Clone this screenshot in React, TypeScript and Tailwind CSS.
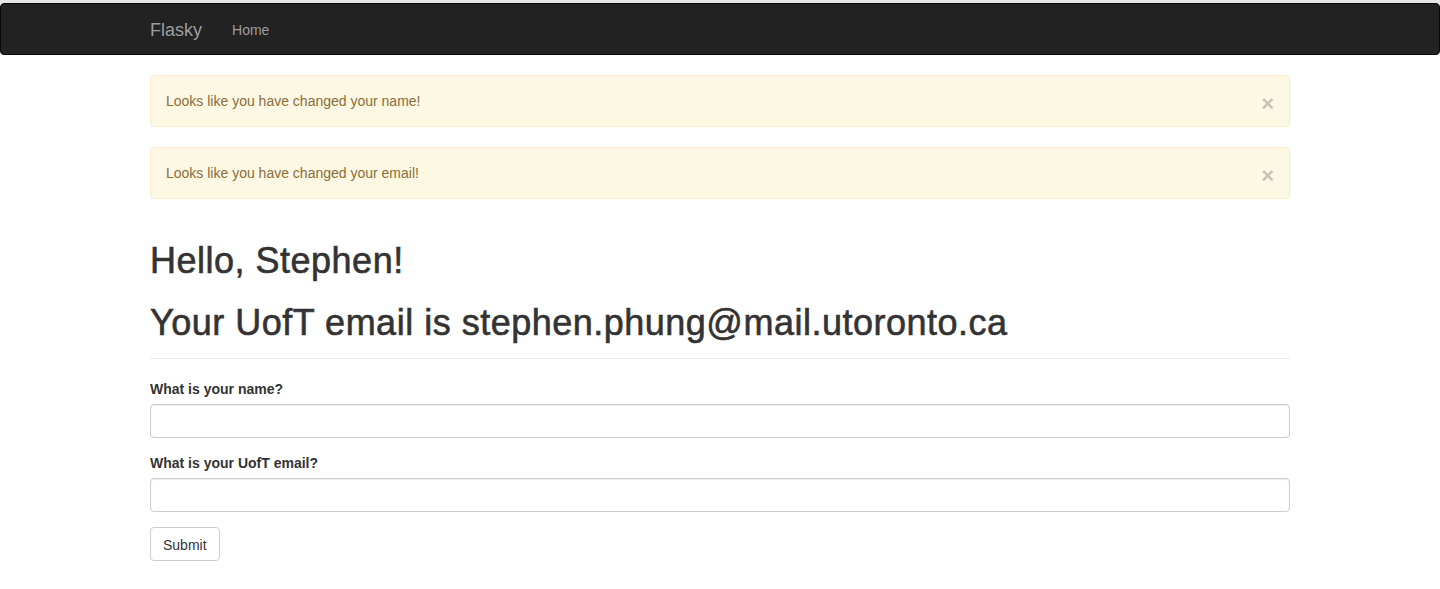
import React from "react";

function Alert({ text }: { text: string }) {
  return (
    <div className="mb-5 flex items-start rounded border border-[#faebcc] bg-[#fcf8e3] p-[15px] text-[#8a6d3b]">
      <div className="flex-1 leading-5">{text}</div>
      <button
        type="button"
        className="h-5 translate-y-[3px] cursor-pointer text-[22px] font-bold leading-5 text-black opacity-20"
      >
        ×
      </button>
    </div>
  );
}

export default function App() {
  return (
    <div
      className="min-h-[589px] bg-white text-[14px] leading-5 text-[#333]"
      style={{ fontFamily: '"Liberation Sans", Arial, Helvetica, sans-serif' }}
    >
      <div className="h-[3px] bg-[#e6e6e6]" />
      <nav className="mb-5 h-[52px] rounded border border-[#080808] bg-[#222]">
        <div className="mx-auto flex h-[50px] w-[1170px] items-stretch px-[15px]">
          <a className="-ml-[15px] flex h-[50px] items-center px-[15px] pt-[2px] text-[18px] leading-5 text-[#9d9d9d]">
            Flasky
          </a>
          <a className="flex h-[50px] items-center px-[15px] pt-[2px] text-[14px] leading-5 text-[#9d9d9d]">
            Home
          </a>
        </div>
      </nav>
      <div className="mx-auto w-[1170px] px-[15px]">
        <Alert text="Looks like you have changed your name!" />
        <Alert text="Looks like you have changed your email!" />
        <div className="mt-10 mb-5 border-b border-[#eee] pb-[9px]">
          <h1 className="mb-[8px] pt-[2px] text-[36px] leading-[1.1] font-medium tracking-[0.5px] [-webkit-text-stroke:0.6px_#333]">
            Hello, Stephen!
          </h1>
          <h1 className="mt-5 mb-[7px] pt-[2px] text-[36px] leading-[1.1] font-medium tracking-[0.5px] [-webkit-text-stroke:0.6px_#333]">
            Your UofT email is stephen.phung@mail.utoronto.ca
          </h1>
        </div>
        <form>
          <div className="mb-[15px]">
            <label className="mb-[5px] block font-bold">What is your name?</label>
            <input
              type="text"
              className="block h-[34px] w-full rounded border border-[#ccc] px-3 py-1.5 shadow-[inset_0_1px_1px_rgba(0,0,0,0.075)] outline-none"
            />
          </div>
          <div className="mb-[15px]">
            <label className="mb-[5px] block font-bold">What is your UofT email?</label>
            <input
              type="text"
              className="block h-[34px] w-full rounded border border-[#ccc] px-3 py-1.5 shadow-[inset_0_1px_1px_rgba(0,0,0,0.075)] outline-none"
            />
          </div>
          <button
            type="button"
            className="h-[34px] rounded border border-[#ccc] bg-white px-3 pt-[1px] text-[14px] leading-5 text-[#333]"
          >
            Submit
          </button>
        </form>
      </div>
    </div>
  );
}
